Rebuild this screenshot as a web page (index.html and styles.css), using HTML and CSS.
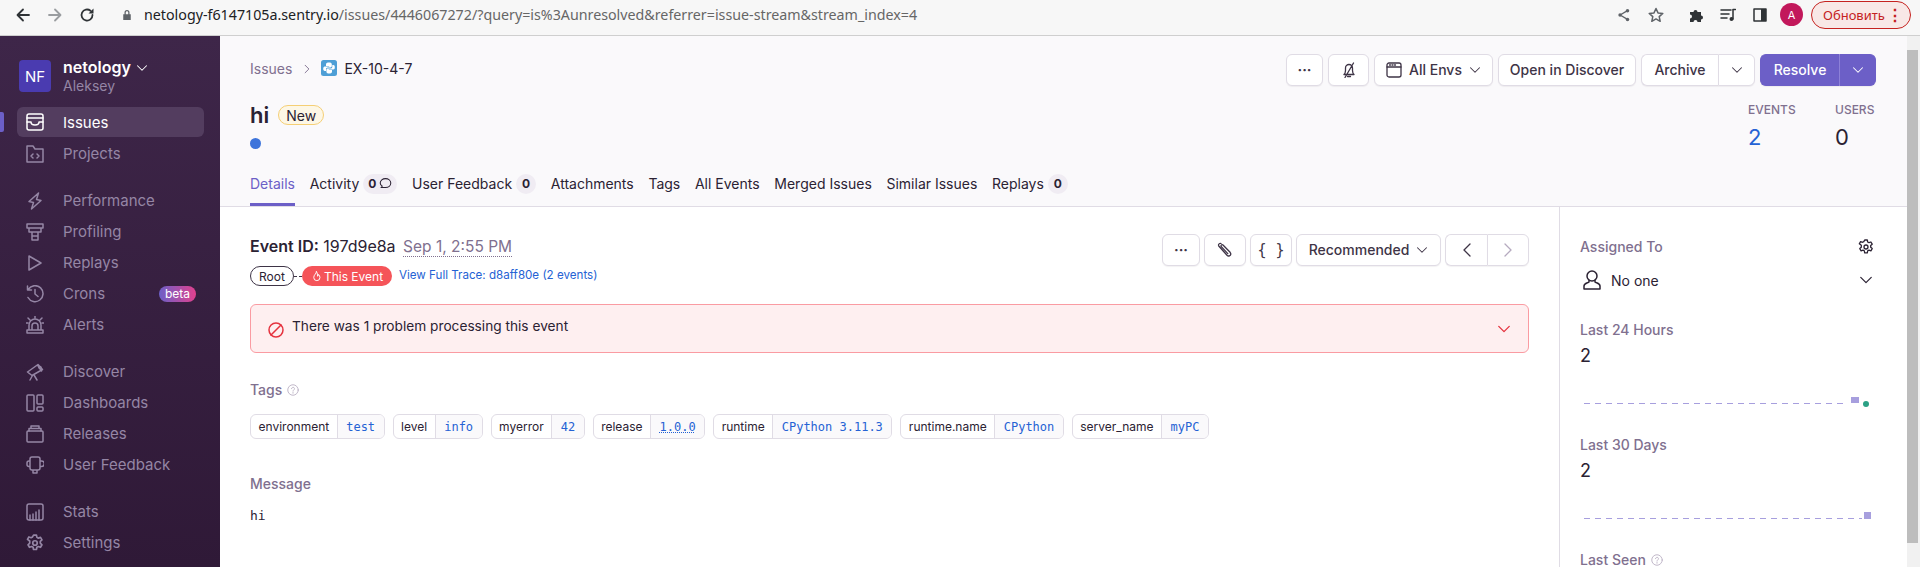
FILE: index.html
```html
<!DOCTYPE html>
<html lang="en">
<head>
    <meta charset="UTF-8">
    <title>EX-10-4-7 - hi - Sentry</title>
    <link rel="stylesheet" href="styles.css">
</head>
<body>

<svg class="sprite" width="0" height="0">
    <symbol id="chev-down" viewBox="0 0 16 16"><path d="M2 5l6 6 6-6"/></symbol>
    <symbol id="help" viewBox="0 0 16 16"><circle cx="8" cy="8" r="7"/><path d="M6 6.2C6 3.8 10 3.8 10 6.2C10 7.8 8 7.8 8 9.5"/><path d="M8 11.3v1"/></symbol>
    <symbol id="gear" viewBox="0 0 16 16"><path d="M6.7 1h2.6l.4 2 1.3.7 1.900-.7 1.300 2.200-1.500 1.400v1.600l1.500 1.400-1.300 2.200-1.900-.7-1.300.7-.4 2H6.700l-.4-2-1.300-.7-1.900.7-1.300-2.200 1.500-1.400V6.200L1.300 4.800l1.300-2.200 1.900.7 1.300-.7z"/><circle cx="8" cy="8" r="2"/></symbol>
</svg>

<div class="browser-bar">
    <svg class="br-icon" viewBox="0 0 16 16"><path d="M14 8H3M8 2.5L2.5 8 8 13.5"/></svg>
    <svg class="br-icon br-off" viewBox="0 0 16 16"><path d="M2 8h11M8 2.5L13.5 8 8 13.5"/></svg>
    <svg class="br-icon" viewBox="0 0 16 16"><path d="M13.5 8A5.500 5.500 0 1 1 11.500 3.800"/><path class="fill" d="M14.500 1.500v5h-5z"/></svg>
    <svg class="br-lock" viewBox="0 0 12 14"><path d="M3 6V4a3 3 0 0 1 6 0v2h1.500v7h-9V6zM4.500 6h3V4a1.500 1.500 0 0 0-3 0z"/></svg>
    <div class="url"><span class="host">netology-f6147105a.sentry.io</span>/issues/4446067272/?query=is%3Aunresolved&amp;referrer=issue-stream&amp;stream_index=4</div>
    <div class="br-right">
        <svg class="br-small share" viewBox="0 0 16 16"><circle cx="12" cy="3" r="2" class="fill"/><circle cx="12" cy="13" r="2" class="fill"/><circle cx="3.5" cy="8" r="2" class="fill"/><path d="M12 3L3.5 8 12 13"/></svg>
        <svg class="br-small star" viewBox="0 0 16 16"><path d="M8 1.5l2 4.400 4.800.5-3.600 3.200 1 4.700L8 11.900l-4.200 2.400 1-4.700L1.200 6.400 6 5.900z"/></svg>
        <svg class="br-small puzzle" viewBox="0 0 16 16"><path class="fill" d="M1 5h3.500a2 2 0 1 1 4 0H12v3.500a2 2 0 1 1 0 4V15H8.500a2 2 0 1 0-4 0H1v-3.500a2 2 0 1 0 0-4z"/></svg>
        <svg class="br-small media" viewBox="0 0 16 16"><path d="M1 3h10M1 7h8M1 11h6M13 3v9"/><circle class="fill" cx="11.5" cy="12" r="2"/><path d="M13 2.500h2.500"/></svg>
        <svg class="br-small panel" viewBox="0 0 14 14"><rect x="1" y="1" width="12" height="12"/><rect class="fill" x="8" y="1" width="5" height="12"/></svg>
        <div class="br-avatar">A</div>
        <div class="br-update">Обновить <span class="br-dots">⋮</span></div>
    </div>
</div>

<div class="page">
    <nav class="sidebar">
        <div class="org">
            <div class="org-avatar">NF</div>
            <div class="org-text">
                <div class="org-name">netology <svg class="ico-chev" viewBox="0 0 16 16"><use href="#chev-down"/></svg></div>
                <div class="org-user">Aleksey</div>
            </div>
        </div>
        <div class="active-mark"></div>

        <div class="nav-group">
            <a class="nav-item active"><svg class="nav-ico" viewBox="0 0 18 18"><rect x="1" y="1" width="16" height="16" rx="2"/><path d="M1 5h16M1 9h4c0 4 8 4 8 0h4"/></svg>Issues</a>
            <a class="nav-item"><svg class="nav-ico" viewBox="0 0 18 18"><path d="M1 17V1h6l2 3h8v13zM7 9l-2 2 2 2M11 9l2 2-2 2"/></svg>Projects</a>
        </div>
        <div class="nav-group">
            <a class="nav-item"><svg class="nav-ico" viewBox="0 0 18 18"><path d="M12.5 1L3 9.5l4.500 1L5.500 17 15 8.500l-4.500-1z"/></svg>Performance</a>
            <a class="nav-item"><svg class="nav-ico" viewBox="0 0 18 18"><path d="M1 1h16v4H1zM3 5v4h12V5M6 9v8h6V9M6 13h6"/></svg>Profiling</a>
            <a class="nav-item"><svg class="nav-ico" viewBox="0 0 18 18"><path d="M3 2l12 7-12 7z"/></svg>Replays</a>
            <a class="nav-item"><svg class="nav-ico" viewBox="0 0 18 18"><path d="M2.5 4A8 8 0 1 1 2 12.500M1.500 1v4h4M9 4.500V9l3 2.500"/></svg>Crons<span class="beta">beta</span></a>
            <a class="nav-item"><svg class="nav-ico" viewBox="0 0 18 18"><path d="M1 17h16v-3H1zM3 14V9a6 6 0 0 1 12 0v5M6 14v-4a3 3 0 0 1 6 0v4M9 0v2M2 2l2 2M16 2l-2 2M0 7h2M16 7h2"/></svg>Alerts</a>
        </div>
        <div class="nav-group">
            <a class="nav-item"><svg class="nav-ico" viewBox="0 0 18 18"><path d="M1.5 9L12 1.500l4.500 5L6 12.500zM11.500 2l4 6M8 12l3 5M6.500 12.500L4 17"/><circle cx="14" cy="4.5" r="1"/></svg>Discover</a>
            <a class="nav-item"><svg class="nav-ico" viewBox="0 0 18 18"><rect x="1" y="1" width="7" height="16" rx="1"/><rect x="11" y="1" width="6" height="9" rx="1"/><rect x="11" y="13" width="6" height="4" rx="1"/></svg>Dashboards</a>
            <a class="nav-item"><svg class="nav-ico" viewBox="0 0 18 18"><rect x="1" y="6" width="16" height="11" rx="1"/><path d="M3 6V3.5h12V6M5 3.5V1h8v2.5"/></svg>Releases</a>
            <a class="nav-item"><svg class="nav-ico" viewBox="0 0 18 18"><path d="M4 5V3a2 2 0 0 1 2-2h6a2 2 0 0 1 2 2v9a2 2 0 0 1-2 2H6a2 2 0 0 1-2-2zM4 5H3a2 2 0 0 0-2 2v1.500a2 2 0 0 0 2 2h1M14 5h1.500a2 2 0 0 1 0 5.500H14M7 14v3h4v-3"/></svg>User Feedback</a>
        </div>
        <div class="nav-group">
            <a class="nav-item"><svg class="nav-ico" viewBox="0 0 18 18"><rect x="1" y="1" width="16" height="16" rx="2"/><path d="M4 17v-5M7 17v-6M10 17V9M13 17V7"/></svg>Stats</a>
            <a class="nav-item"><svg class="nav-ico" viewBox="0 0 16 16"><use href="#gear"/></svg>Settings</a>
        </div>
    </nav>

    <main class="main">
        <header class="issue-head">
            <div class="head-top">
                <div class="crumbs">
                    <span class="crumb-link">Issues</span>
                    <svg class="crumb-sep" viewBox="0 0 16 16"><path d="M5 2l6 6-6 6"/></svg>
                    <svg class="py-logo" viewBox="0 0 16 16"><rect width="16" height="16" rx="2.5" fill="#4e9fd6"/><path fill="#fff" d="M8 2.5c-2 0-3 .6-3 1.800V6h3.200v.5H3.700c-1 0-1.500 1-1.500 2.300s.5 2.200 1.500 2.200H5V9.300c0-1 .8-1.800 1.800-1.800h2.600c.8 0 1.400-.6 1.400-1.400V4.300c0-1.200-1-1.800-2.800-1.800z"/><path fill="#fff" d="M8 13.500c2 0 3-.6 3-1.800V10H7.800v-.5h4.500c1 0 1.500-1 1.500-2.300S13.300 5 12.300 5H11.300v1.700c0 1-.8 1.800-1.800 1.800H6.800c-.8 0-1.400.6-1.400 1.400v1.800c0 1.200 1 1.800 2.600 1.800z"/></svg>
                    <span class="crumb-id">EX-10-4-7</span>
                </div>
                <div class="head-actions">
                    <button class="btn btn-icon"><span class="dots">···</span></button>
                    <button class="btn btn-bell"><svg class="ico" viewBox="0 0 16 16"><path d="M3 12.5h10c-1-1-1.500-2-1.500-4V6a3.500 3.500 0 0 0-7 0v2.500c0 2-.5 3-1.500 4zM6.500 14.500h3M12.500 1L4 15.500"/></svg></button>
                    <button class="btn btn-envs"><svg class="ico" viewBox="0 0 16 16"><rect x="1" y="1" width="14" height="14" rx="2"/><path d="M1 5h14M3.500 3h1M6 3h1M8.500 3h1"/></svg>All Envs<svg class="ico-chev" viewBox="0 0 16 16"><use href="#chev-down"/></svg></button>
                    <button class="btn btn-open">Open in Discover</button>
                    <div class="btn-split">
                        <button class="btn btn-archive">Archive</button>
                        <button class="btn btn-arrow"><svg class="ico-chev" viewBox="0 0 16 16"><use href="#chev-down"/></svg></button>
                    </div>
                    <div class="btn-split">
                        <button class="btn btn-primary btn-resolve">Resolve</button>
                        <button class="btn btn-primary btn-arrow"><svg class="ico-chev" viewBox="0 0 16 16"><use href="#chev-down"/></svg></button>
                    </div>
                </div>
            </div>
            <div class="head-mid">
                <div class="title-wrap">
                    <div class="title-row"><h1>hi</h1><span class="badge-new">New</span></div>
                    <div class="blue-dot"></div>
                </div>
                <div class="counts">
                    <div class="count count-events"><div class="count-label">EVENTS</div><div class="count-num link">2</div></div>
                    <div class="count count-users"><div class="count-label">USERS</div><div class="count-num">0</div></div>
                </div>
            </div>
            <div class="tabs">
                <a class="tab current">Details</a>
                <a class="tab">Activity <span class="tab-badge">0<svg viewBox="0 0 16 16"><path d="M8 2c3.500 0 6.500 2.300 6.500 5.500S11.500 13 8 13H2.500l1.500-1.800C2.500 10.300 1.500 9 1.500 7.500 1.500 4.300 4.500 2 8 2z"/></svg></span></a>
                <a class="tab">User Feedback <span class="tab-badge">0</span></a>
                <a class="tab">Attachments</a>
                <a class="tab">Tags</a>
                <a class="tab">All Events</a>
                <a class="tab">Merged Issues</a>
                <a class="tab">Similar Issues</a>
                <a class="tab">Replays <span class="tab-badge">0</span></a>
            </div>
        </header>

        <div class="body-row">
            <section class="content">
                <div class="event-row">
                    <div class="event-info">
                        <div class="event-id"><b>Event ID:</b> 197d9e8a <span class="event-date">Sep 1, 2:55 PM</span></div>
                        <div class="trace-row">
                            <span class="pill-root">Root</span>
                            <span class="pill-dash"></span>
                            <span class="pill-this"><svg viewBox="0 0 16 16"><path d="M8 1c0 3-4 4.500-4 8.500a4.500 4.500 0 0 0 9 0c0-2-1-3.500-2-4.500 0 1.500-.5 2-1.500 2.500C9.500 5 9.500 3 8 1z"/></svg>This Event</span>
                            <span class="trace-link">View Full Trace: d8aff80e (2 events)</span>
                        </div>
                    </div>
                    <div class="event-actions">
                        <button class="btn btn-dots2"><span class="dots">···</span></button>
                        <button class="btn btn-clip"><svg class="ico" viewBox="0 0 16 16"><path d="M4 1.500c-1.300-.6-3 .8-2.300 2.300l.3.5 8 9c1.500 1.400 3.800.4 3.800-1.300 0-.7-.3-1.200-.7-1.700L6 3c-.8-.8-2-.2-2 .8 0 .3.100.6.300.8l6.500 7"/></svg></button>
                        <button class="btn btn-json">{ }</button>
                        <button class="btn btn-rec">Recommended<svg class="ico-chev" viewBox="0 0 16 16"><use href="#chev-down"/></svg></button>
                        <div class="btn-split">
                            <button class="btn btn-nav"><svg class="ico" viewBox="0 0 16 16"><path d="M11 2L5 8l6 6"/></svg></button>
                            <button class="btn btn-nav btn-dim"><svg class="ico" viewBox="0 0 16 16"><path d="M5 2l6 6-6 6"/></svg></button>
                        </div>
                    </div>
                </div>

                <div class="alert">
                    <svg class="alert-ico" viewBox="0 0 16 16"><circle cx="8" cy="8" r="7"/><path d="M3 13L13 3"/></svg>
                    <span class="alert-text">There was 1 problem processing this event</span>
                    <svg class="alert-chev" viewBox="0 0 16 16"><use href="#chev-down"/></svg>
                </div>

                <h3 class="sec-title sec-tags">Tags <svg class="ico-help" viewBox="0 0 16 16"><use href="#help"/></svg></h3>
                <div class="tag-list">
                    <div class="tag"><span class="tag-key">environment</span><span class="tag-val">test</span></div>
                    <div class="tag"><span class="tag-key">level</span><span class="tag-val">info</span></div>
                    <div class="tag"><span class="tag-key">myerror</span><span class="tag-val">42</span></div>
                    <div class="tag"><span class="tag-key">release</span><span class="tag-val"><u>1.0.0</u></span></div>
                    <div class="tag"><span class="tag-key">runtime</span><span class="tag-val">CPython 3.11.3</span></div>
                    <div class="tag"><span class="tag-key">runtime.name</span><span class="tag-val">CPython</span></div>
                    <div class="tag"><span class="tag-key">server_name</span><span class="tag-val">myPC</span></div>
                </div>

                <h3 class="sec-title sec-msg">Message</h3>
                <pre class="message">hi</pre>
            </section>

            <aside class="side">
                <div class="side-head"><h3 class="sec-title">Assigned To</h3><svg class="ico" viewBox="0 0 16 16"><use href="#gear"/></svg></div>
                <div class="assignee">
                    <svg class="ico-user" viewBox="0 0 20 20"><circle cx="10" cy="6" r="5"/><path d="M7 10.500V12c-1 1-5 1-5 4v3h16v-3c0-3-4-3-5-4v-1.500"/></svg>
                    <span>No one</span>
                    <svg class="ico-chev wide" viewBox="0 0 16 16"><use href="#chev-down"/></svg>
                </div>
                <h3 class="sec-title stat-title first-stat">Last 24 Hours</h3>
                <div class="stat-num">2</div>
                <div class="spark">
                    <svg width="296" height="12" viewBox="0 0 296 12"><line x1="4" y1="7.5" x2="268" y2="7.5" class="spark-line"/><rect x="271" y="1" width="8" height="6" class="spark-bar"/><circle cx="286" cy="8" r="3" fill="#2ba185" stroke="none"/></svg>
                </div>
                <h3 class="sec-title stat-title">Last 30 Days</h3>
                <div class="stat-num">2</div>
                <div class="spark">
                    <svg width="296" height="12" viewBox="0 0 296 12"><line x1="4" y1="7.5" x2="282" y2="7.5" class="spark-line"/><rect x="284" y="1" width="7" height="7" class="spark-bar"/></svg>
                </div>
                <h3 class="sec-title stat-title">Last Seen <svg class="ico-help" viewBox="0 0 16 16"><use href="#help"/></svg></h3>
            </aside>
        </div>
    </main>

    <div class="scrollbar"><div class="scroll-thumb"></div></div>
</div>

</body>
</html>
```

FILE: styles.css
```css
* {
    box-sizing: border-box;
}
html, body {
    margin: 0;
    height: 567px;
    overflow: hidden;
}
body {
    font-family: Inter, "Liberation Sans", sans-serif;
    font-size: 14px;
    color: #2b2233;
    background-color: #fff;
}
svg {
    fill: none;
    stroke: currentColor;
    stroke-width: 1.5;
    stroke-linecap: round;
    stroke-linejoin: round;
    flex-shrink: 0;
}
.sprite {
    position: absolute;
}
button {
    font-family: inherit;
}
h1, h3 {
    margin: 0;
}

/* browser chrome */
.browser-bar {
    height: 36px;
    display: flex;
    align-items: center;
    padding: 0 0 6px 15px;
    background-color: #f7f7f7;
    border-bottom: 1px solid #cfcfcf;
    color: #2f3336;
}
.br-icon {
    width: 16px;
    height: 16px;
    margin-right: 16px;
    stroke-width: 1.8;
}
.br-off {
    color: #9a9da0;
}
.fill {
    fill: currentColor;
    stroke: none;
}
.br-lock {
    width: 10px;
    height: 12px;
    margin: 0 12px 0 11px;
    fill: #5f6368;
    stroke: none;
}
.url {
    font-family: "Noto Sans", sans-serif;
    font-size: 14.25px;
    color: #666;
    white-space: nowrap;
}
.host {
    color: #202124;
}
.br-right {
    margin-left: auto;
    display: flex;
    align-items: center;
}
.br-small {
    width: 16px;
    height: 16px;
    color: #5f6368;
}
.share {
    width: 14px;
    height: 14px;
    margin-right: 17px;
}
.star {
    margin-right: 25px;
}
.puzzle {
    color: #2f3336;
    margin-right: 15px;
}
.media {
    color: #2f3336;
    margin-right: 17px;
}
.panel {
    color: #2f3336;
    width: 14px;
    height: 14px;
    margin-right: 13px;
}
.br-avatar {
    width: 23px;
    height: 23px;
    border-radius: 50%;
    background-color: #c2185b;
    color: #fff;
    font-size: 11px;
    display: flex;
    align-items: center;
    justify-content: center;
    margin-right: 8px;
}
.br-update {
    width: 100px;
    height: 28px;
    border: 1px solid #c5221f;
    border-radius: 14px;
    background-color: #f8e8e6;
    color: #c5221f;
    font-family: "Noto Sans", sans-serif;
    font-size: 13px;
    display: flex;
    align-items: center;
    justify-content: space-between;
    padding: 0 7px 0 11px;
    margin-right: 9px;
}
.br-dots {
    font-size: 16px;
    font-weight: 700;
}

.page {
    display: flex;
    height: 531px;
}

/* sidebar */
.sidebar {
    width: 220px;
    flex-shrink: 0;
    position: relative;
    background: linear-gradient(to bottom, #3e2649, #2f1937);
    color: #9586a5;
    padding: 22px 16px 0 17px;
}
.org {
    display: flex;
    align-items: center;
    gap: 12px;
    margin: 0 0 13px 2px;
}
.org-avatar {
    width: 32px;
    height: 32px;
    border-radius: 4px;
    background-color: #4a3bb0;
    color: #fff;
    font-size: 15px;
    display: flex;
    align-items: center;
    justify-content: center;
}
.org-name {
    color: #fff;
    font-size: 16px;
    font-weight: 600;
    line-height: 19px;
    display: flex;
    align-items: center;
    gap: 5px;
}
.org-user {
    font-size: 14px;
    line-height: 17px;
}
.active-mark {
    position: absolute;
    left: 0;
    top: 76px;
    width: 4px;
    height: 20px;
    border-radius: 0 2px 2px 0;
    background-color: #6c5fc7;
}
.nav-group {
    margin-bottom: 16px;
}
.nav-item {
    display: flex;
    align-items: center;
    height: 31px;
    padding-left: 9px;
    gap: 19px;
    font-size: 15px;
    border-radius: 6px;
}
.nav-item.active {
    height: 30px;
    margin-bottom: 1px;
    background-color: #533d5f;
    color: #fff;
}
.nav-ico {
    width: 18px;
    height: 18px;
}
.beta {
    margin-left: auto;
    margin-right: 8px;
    height: 16px;
    line-height: 15px;
    padding: 0 6px;
    border-radius: 8px;
    font-size: 12px;
    color: #fff;
    background: linear-gradient(to right, #6c5fc7, #e1418e);
}

/* main area */
.main {
    flex: 1;
    min-width: 0;
    display: flex;
    flex-direction: column;
}
.issue-head {
    height: 171px;
    flex-shrink: 0;
    background-color: #faf9fb;
    border-bottom: 1px solid #e0dce5;
    padding: 18px 31px 0 30px;
    display: flex;
    flex-direction: column;
}
.head-top {
    display: flex;
    justify-content: space-between;
    align-items: center;
    height: 32px;
}
.crumbs {
    display: flex;
    align-items: center;
    margin-top: -4px;
}
.crumb-link {
    color: #80708f;
}
.crumb-sep {
    width: 10px;
    height: 10px;
    margin: 2px 9px 0 10px;
    color: #80708f;
}
.py-logo {
    width: 16px;
    height: 16px;
    stroke: none;
    margin: 0 7px 0 0;
}
.head-actions {
    display: flex;
    gap: 5px;
}
.event-actions {
    display: flex;
    gap: 4px;
}
.btn {
    height: 32px;
    display: flex;
    align-items: center;
    justify-content: center;
    gap: 7px;
    background-color: #fff;
    border: 1px solid #e0dce5;
    border-radius: 6px;
    box-shadow: 0 1px 1px rgba(43, 34, 51, 0.06);
    color: #3e3446;
    font-size: 14px;
    font-weight: 500;
    padding: 0 0 1px;
}
.btn-icon { width: 37px; }
.btn-bell { width: 41px; }
.btn-envs { width: 119px; }
.btn-open { width: 138px; }
.btn-archive { width: 77px; }
.btn-resolve { width: 79px; }
.btn-arrow { width: 37px; }
.btn-dots2 { width: 38px; }
.btn-clip, .btn-json { width: 42px; }
.btn-rec { width: 145px; }
.btn-nav { width: 42px; }
.btn-dim { color: #b5aabf; }
.btn-json {
    font-family: "DejaVu Sans Mono", monospace;
    font-weight: 400;
    font-size: 15px;
}
.btn-split {
    display: flex;
}
.btn-split .btn:first-child {
    border-radius: 6px 0 0 6px;
    border-right: none;
}
.btn-split .btn:last-child {
    border-radius: 0 6px 6px 0;
}
.btn-primary {
    background-color: #6c5fc7;
    border-color: #6c5fc7;
    color: #fff;
}
.btn-primary.btn-arrow {
    border-left: 1px solid #8d81d8;
}
.dots {
    font-weight: 700;
}
.ico {
    width: 16px;
    height: 16px;
    stroke-width: 1.3;
}
.ico-chev {
    width: 12px;
    height: 12px;
    stroke-width: 1.4;
}
.head-mid {
    display: flex;
    justify-content: space-between;
    height: 66px;
    margin-top: 2px;
}
.title-wrap {
    padding-top: 12px;
}
.title-row {
    display: flex;
    align-items: center;
    gap: 9px;
    height: 30px;
}
h1 {
    font-size: 22px;
    font-weight: 600;
}
.badge-new {
    height: 20px;
    width: 46px;
    border: 1px solid #f5cf75;
    border-radius: 10px;
    background-color: #fdf7e6;
    display: flex;
    align-items: center;
    justify-content: center;
    font-size: 14px;
}
.blue-dot {
    width: 11px;
    height: 11px;
    border-radius: 50%;
    background-color: #3d74db;
    margin-top: 8px;
}
.counts {
    display: flex;
    padding-top: 14px;
}
.count-events { width: 87px; }
.count-users { width: 41px; }
.count-label {
    font-size: 12px;
    font-weight: 500;
    color: #80708f;
    line-height: 16px;
}
.count-num {
    font-size: 22px;
    line-height: 28px;
    margin-top: 5px;
}
.count-num.link {
    color: #2562d4;
}
.tabs {
    display: flex;
    gap: 14.7px;
    margin-top: auto;
    height: 36px;
}
.tab {
    display: flex;
    align-items: center;
    gap: 4px;
    height: 36px;
    padding-bottom: 9px;
    white-space: nowrap;
}
.tab.current {
    color: #6c5fc7;
    border-bottom: 3px solid #6c5fc7;
    padding-bottom: 6px;
}
.tab-badge {
    height: 20px;
    min-width: 20px;
    padding: 0 5px;
    border-radius: 10px;
    background-color: #f0ecf3;
    font-size: 12px;
    font-weight: 700;
    display: flex;
    align-items: center;
    justify-content: center;
    gap: 3px;
}
.tab-badge svg {
    width: 13px;
    height: 13px;
    stroke-width: 1.3;
}

.body-row {
    flex: 1;
    display: flex;
    min-height: 0;
}
.content {
    flex: 1;
    min-width: 0;
    padding: 27px 30px 0 30px;
}
.event-row {
    display: flex;
    justify-content: space-between;
    height: 70px;
}
.event-id {
    font-size: 16px;
    line-height: 22px;
    margin-top: 1px;
}
.event-id b {
    font-weight: 600;
}
.event-date {
    color: #80708f;
    font-size: 15.5px;
    margin-left: 3px;
    border-bottom: 1px dotted #80708f;
}
.trace-row {
    display: flex;
    align-items: center;
    margin-top: 8px;
}
.pill-root {
    width: 44px;
    height: 20px;
    border: 1px solid #3e3446;
    border-radius: 10px;
    font-size: 12px;
    display: flex;
    align-items: center;
    justify-content: center;
}
.pill-dash {
    width: 8px;
    border-top: 1px dashed #3e3446;
}
.pill-this {
    width: 90px;
    height: 20px;
    border-radius: 10px;
    background-color: #f55459;
    color: #fff;
    font-size: 12px;
    display: flex;
    align-items: center;
    justify-content: center;
    gap: 2px;
}
.pill-this svg {
    width: 11px;
    height: 11px;
    stroke-width: 1.4;
}
.trace-link {
    color: #2562d4;
    font-size: 11.6px;
    margin-left: 7px;
    padding-bottom: 3px;
}
.alert {
    height: 49px;
    display: flex;
    align-items: center;
    background-color: #feeff0;
    border: 1px solid #fa9ba2;
    border-radius: 6px;
    padding: 0 17px;
}
.alert-ico {
    width: 16px;
    height: 16px;
    color: #e5323e;
    margin-right: 8px;
    margin-top: 2px;
}
.alert-text {
    font-size: 13.7px;
    flex: 1;
    padding-bottom: 6px;
}
.alert-chev {
    width: 14px;
    height: 14px;
    color: #e5323e;
}
.sec-title {
    font-size: 14px;
    font-weight: 500;
    color: #80708f;
    line-height: 18px;
    display: flex;
    align-items: center;
    gap: 5px;
}
.ico-help {
    width: 12px;
    height: 12px;
    stroke-width: 1.1;
    color: #b5aabf;
}
.sec-tags {
    margin-top: 28px;
}
.tag-list {
    display: flex;
    gap: 8px;
    margin-top: 15px;
}
.tag {
    display: flex;
    height: 25px;
    border: 1px solid #e0dce5;
    border-radius: 6px;
    overflow: hidden;
    font-size: 12px;
}
.tag-key {
    padding: 0 7.5px;
    display: flex;
    align-items: center;
    border-right: 1px solid #e0dce5;
}
.tag-val {
    padding: 0 8.5px;
    display: flex;
    align-items: center;
    background-color: #faf9fb;
    color: #2562d4;
    font-family: "DejaVu Sans Mono", monospace;
    font-size: 12px;
}
.tag-val u {
    text-decoration-style: dotted;
}
.sec-msg {
    margin-top: 36px;
}
.message {
    font-family: "DejaVu Sans Mono", monospace;
    font-size: 13px;
    margin: 15px 0 0;
}

/* right column */
.side {
    width: 348px;
    flex-shrink: 0;
    border-left: 1px solid #e0dce5;
    padding: 31px 31px 0 20px;
}
.side-head {
    display: flex;
    justify-content: space-between;
    align-items: center;
}
.side-head .ico {
    margin-right: 2px;
}
.assignee {
    display: flex;
    align-items: center;
    gap: 9px;
    height: 20px;
    margin-top: 14px;
    padding-left: 2px;
}
.ico-user {
    width: 20px;
    height: 20px;
}
.ico-chev.wide {
    width: 14px;
    height: 14px;
    margin-left: auto;
    margin-right: 3px;
}
.first-stat {
    margin-top: 31px;
}
.stat-num {
    font-size: 18px;
    line-height: 24px;
    margin-top: 5px;
}
.spark {
    height: 12px;
    margin-top: 26px;
    margin-bottom: 30px;
}
.spark-line {
    stroke: #a79fde;
    stroke-width: 1;
    stroke-dasharray: 6 5;
    stroke-linecap: butt;
}
.spark-bar {
    fill: #a79fde;
    stroke: none;
}

.scrollbar {
    width: 13px;
    flex-shrink: 0;
    background-color: #f1f1f1;
    padding: 14px 2px 0 0;
}
.scroll-thumb {
    height: 493px;
    background-color: #bdbdbd;
}
```
